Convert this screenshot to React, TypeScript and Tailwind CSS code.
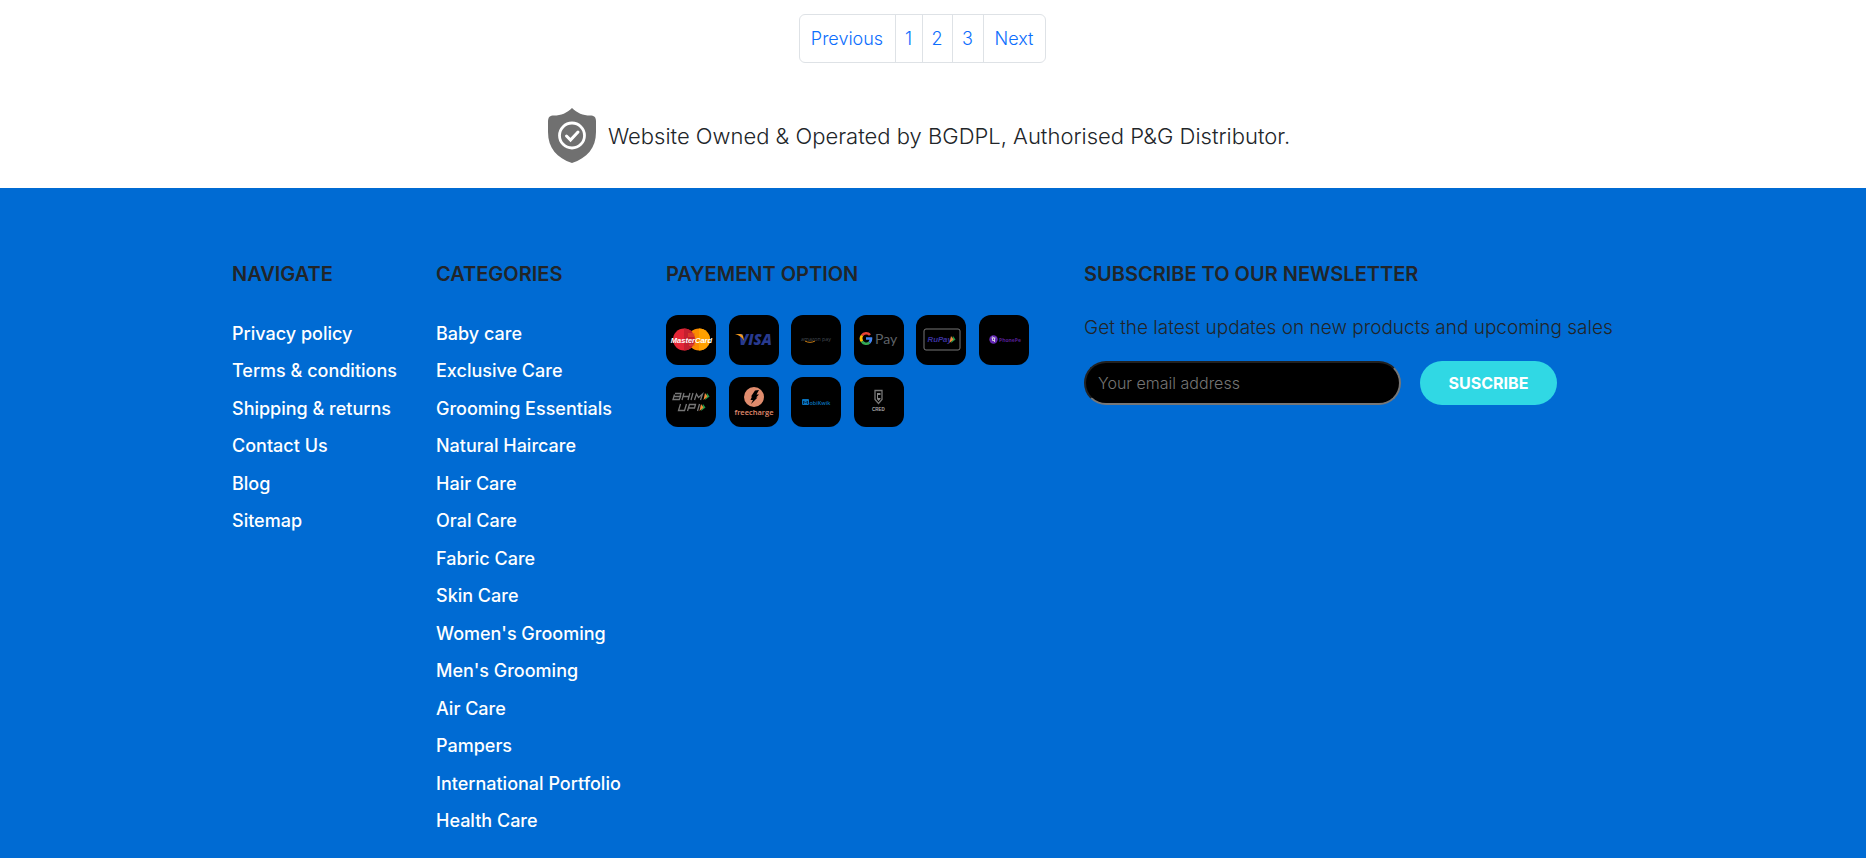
import type { ReactNode } from "react";

const navigate = ["Privacy policy", "Terms & conditions", "Shipping & returns", "Contact Us", "Blog", "Sitemap"];

const categories = [
  "Baby care", "Exclusive Care", "Grooming Essentials", "Natural Haircare", "Hair Care", "Oral Care", "Fabric Care",
  "Skin Care", "Women's Grooming", "Men's Grooming", "Air Care", "Pampers", "International Portfolio", "Health Care",
];

const pages = ["Previous", "1", "2", "3", "Next"];

const Logo = ({ name, children }: { name: string; children: ReactNode }) => (
  <li>
    <svg role="img" aria-label={name} viewBox="0 0 50 50" className="size-[50px] rounded-xl bg-black font-['Open_Sans',sans-serif]">
      {children}
    </svg>
  </li>
);

const Flag = ({ x, y }: { x: number; y: number }) => (
  <g>
    <path d={`M${x + 1} ${y}l2.500 3.500-4.500 3.500z`} fill="#1f9a4c" />
    <path d={`M${x - 1} ${y}l2.500 3.500-4 3.500z`} fill="#f0883a" />
  </g>
);

function PaymentLogos() {
  return (
    <ul className="grid w-[363px] grid-cols-[repeat(6,50px)] justify-between gap-y-3">
      <Logo name="MasterCard">
        <circle cx="18" cy="24.500" r="11" fill="#e32636" />
        <circle cx="33" cy="24.500" r="11" fill="#fb8c00" />
        <path d="M18 13.500A11 11 0 0 1 18 35.500z" fill="#c4202f" />
        <path d="M33 13.500A11 11 0 0 1 33 35.500z" fill="#ffa000" />
        <path d="M22 19h7M22 21h6M23 30h6" stroke="#e8562a" />
        <text x="25.500" y="28" textAnchor="middle" fontSize="7.500" fontWeight="700" fontStyle="italic" fill="#fff" className="font-['Liberation_Sans_Narrow','Liberation_Sans',sans-serif]">MasterCard</text>
      </Logo>
      <Logo name="Visa">
        <text x="10" y="30" fontSize="15" fontWeight="800" fontStyle="italic" fill="#283a8f">VISA</text>
        <path d="M6 19h5c2 0 3 1 3.500 4l.5 3c-2-4-5-6-9-7z" fill="#f39a1e" />
      </Logo>
      <Logo name="Amazon Pay">
        <text x="25" y="25.500" textAnchor="middle" fontSize="5.300" fill="#454c54">amazon pay</text>
        <path d="M14 26c3 1.800 7 1.800 10 0" fill="none" stroke="#c87c14" />
      </Logo>
      <Logo name="Google Pay">
        <g fill="none" strokeWidth="2.600">
          <path d="M16 20A5 5 0 0 0 8 20.500" stroke="#ea4335" />
          <path d="M8 20.500a5 5 0 0 0 0 6" stroke="#fbbc05" />
          <path d="M8 26.500a5 5 0 0 0 7.500 1" stroke="#34a853" />
          <path d="M15.500 27.500a5 5 0 0 0 1.500-4h-5" stroke="#4285f4" />
        </g>
        <text x="21" y="29" fontSize="14" fill="#5f6368" className="font-[Lato,sans-serif]">Pay</text>
      </Logo>
      <Logo name="RuPay">
        <rect x="8" y="14" width="36" height="21" rx="2" fill="none" stroke="#777" />
        <text x="11.500" y="27" fontSize="7.800" fontWeight="700" fontStyle="italic" fill="#3b32a0" className="font-['Liberation_Sans',sans-serif]">RuPay</text>
        <Flag x={36} y={21} />
      </Logo>
      <Logo name="PhonePe">
        <circle cx="14.500" cy="24.500" r="4.200" fill="#6428b4" />
        <path d="M12.500 23h4M15.500 23v4M13.500 23v2.500h2M13.500 21.500l1 1.500" fill="none" stroke="#ddd" strokeWidth=".9" />
        <text x="20" y="27" fontSize="5" fontWeight="700" fill="#541f91">PhonePe</text>
      </Logo>
      <Logo name="BHIM UPI">
        <g fill="none" stroke="#777" strokeWidth="1.300">
          <path d="M9 16.500h6l-1 3H8.500h6l-1.200 3H7l1.500-5M18 16l-2 7M24 16l-2 7M17 19.500h6M27 16l-2 7M28.500 23l2-6 2 3.500 4-3.500-2 6" />
          <path d="M14.500 27l-2 6.500h6l2-6.500M21.500 34l2-6.500h6l-1 3.500h-6M33.500 27l-2 7" />
        </g>
        <Flag x={40} y={16} />
        <Flag x={36} y={27} />
      </Logo>
      <Logo name="Freecharge">
        <circle cx="25" cy="20" r="10" fill="#e08c6e" />
        <path d="M26 13.500l4-.5-2.500 4.500H30l-3 3h1.500L22 27l2-4h-2.500l1.500-3.500h-1z" fill="#000" />
        <text x="25" y="38" textAnchor="middle" fontSize="7.500" fontWeight="600" fill="#e08c6e">freecharge</text>
      </Logo>
      <Logo name="MobiKwik">
        <rect x="11" y="22" width="7" height="6" rx="1" fill="#0872bd" />
        <path d="M12.500 27v-3l2 2 2-2v3" fill="none" stroke="#001d38" strokeWidth=".8" />
        <text x="18.500" y="27.500" fontSize="5.500" fontWeight="600" fill="#0872bd">obiKwik</text>
      </Logo>
      <Logo name="CRED">
        <path d="M21 13.500h7v9l-3.500 4-3.500-4z" fill="none" stroke="#777" strokeWidth="1.300" />
        <path d="M23 16h3.500v2H24v3h2.500v1l-2 2-1.500-2z" fill="#888" />
        <text x="24.500" y="34" textAnchor="middle" fontSize="4.500" fontWeight="700" fill="#aaa" className="font-['Liberation_Sans_Narrow','Liberation_Sans',sans-serif]">CRED</text>
      </Logo>
    </ul>
  );
}

const LinkList = ({ items }: { items: string[] }) => (
  <ul className="mt-[29px]">
    {items.map((item) => (
      <li key={item} className="flex h-[37px] items-center even:h-[38px]">
        <a href="#" className="whitespace-nowrap text-lg font-medium leading-6 text-white">{item}</a>
      </li>
    ))}
  </ul>
);

const Heading = ({ children }: { children: string }) => (
  <h2 className="whitespace-nowrap text-xl font-semibold leading-6 text-[#212529]">{children}</h2>
);

export default function App() {
  return (
    <div className="flex min-h-screen flex-col bg-white font-[Inter,sans-serif] text-[#212529]">
      <nav aria-label="Pages" className="flex justify-center pr-[22px] pt-3.5">
        <ul className="grid h-[49px] grid-cols-[96px_27px_30px_31px_61px] divide-x divide-[#dee2e6] rounded-md border border-[#dee2e6]">
          {pages.map((page) => (
            <li key={page} className="flex items-center justify-center">
              <a href="#" className="text-lg font-light text-[#0d6efd]">{page}</a>
            </li>
          ))}
        </ul>
      </nav>

      <div className="flex items-center justify-center gap-3 pb-[25px] pr-7 pt-[45px]">
        <svg aria-hidden="true" viewBox="0 0 48 55" className="h-[55px] w-12 shrink-0">
          <path d="M24 0c5 5 11 7.500 18 7.500 4 0 6 1.500 6 6V24c0 16-9 26-24 31C9 50 0 40 0 24V13.500c0-4.500 2-6 6-6C13 7.500 19 5 24 0z" fill="#707070" />
          <circle cx="24" cy="27.500" r="12.500" fill="none" stroke="#fff" strokeWidth="2.800" />
          <path d="M18.500 28l4 4 7.500-8" fill="none" stroke="#fff" strokeWidth="3" strokeLinecap="round" />
        </svg>
        <p className="text-[22px] font-light leading-7">Website Owned &amp; Operated by BGDPL, Authorised P&amp;G Distributor.</p>
      </div>

      <footer className="grow bg-[#006bd3] px-4 pb-4 pt-[74px]">
        <div className="mx-auto grid max-w-[1402px] grid-cols-[204px_230px_418px_1fr]">
          <section>
            <Heading>NAVIGATE</Heading>
            <LinkList items={navigate} />
          </section>
          <section>
            <Heading>CATEGORIES</Heading>
            <LinkList items={categories} />
          </section>
          <section>
            <Heading>PAYEMENT OPTION</Heading>
            <div className="mt-[29px]">
              <PaymentLogos />
            </div>
          </section>
          <section>
            <Heading>SUBSCRIBE TO OUR NEWSLETTER</Heading>
            <p className="mt-[30px] whitespace-nowrap text-[19px] font-light leading-6">Get the latest updates on new products and upcoming sales</p>
            <form className="mt-[21px] flex gap-[19px]">
              <input
                type="email"
                aria-label="Your email address"
                placeholder="Your email address"
                className="h-11 w-[317px] rounded-full border-2 border-b-[#767676] border-l-[#212121] border-r-[#767676] border-t-[#212121] bg-black px-3 text-base font-light text-white placeholder:text-[#757575]"
              />
              <button type="button" className="h-11 w-[137px] rounded-full bg-[#30d8e4] text-base font-bold text-white">SUSCRIBE</button>
            </form>
          </section>
        </div>
      </footer>
    </div>
  );
}
